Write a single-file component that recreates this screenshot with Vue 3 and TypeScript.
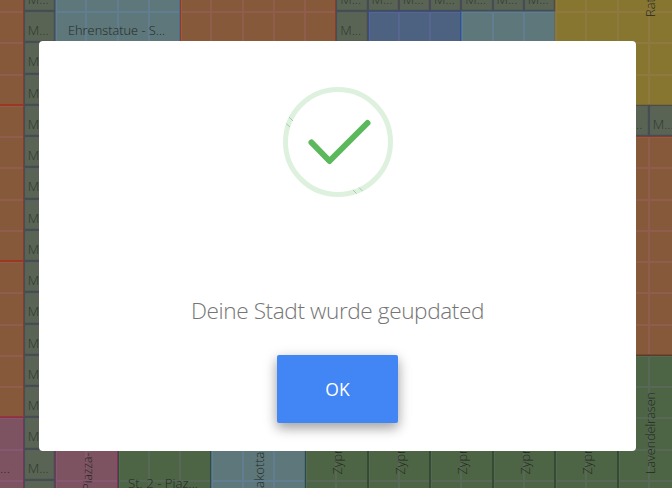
<script setup lang="ts">
type Kind = 'brown' | 'path' | 'teal' | 'blue' | 'gold' | 'green' | 'pink'

interface Tile {
  kind: Kind
  col: number
  row: number
  w: number
  h: number
}

interface Label {
  text: string
  x: number
  y: number
  length: number
  vertical?: boolean
  faint?: boolean
}

const UNIT = 31.25
const px = (col: number): number => Math.round(23.8 + col * UNIT)
const py = (row: number): number => Math.round(11 + row * UNIT)

const tile = (kind: Kind, col: number, row: number, w: number, h: number): Tile => ({ kind, col, row, w, h })

const paths: Tile[] = [
  ...Array.from({ length: 17 }, (_, i) => tile('path', 0, i - 1, 1, 1)),
  ...Array.from({ length: 7 }, (_, i) => tile('path', 10 + i, -1, 1, 1)),
  tile('path', 10, 0, 1, 1),
  tile('path', 19, 3, 1, 1),
  tile('path', 20, 3, 1, 1),
]

const tiles: Tile[] = [
  tile('brown', -4, -2, 4, 5),
  tile('brown', -4, 3, 4, 5),
  tile('brown', -4, 8, 4, 5),
  tile('pink', -4, 13, 4, 4),
  tile('teal', 1, -2, 4, 4),
  tile('brown', 5, -2, 5, 6),
  tile('blue', 11, 0, 3, 3),
  tile('teal', 14, 0, 3, 3),
  tile('gold', 17, -4, 6, 7),
  tile('brown', 17, 4, 6, 7),
  tile('pink', 1, 12, 2, 6),
  tile('green', 3, 12, 3, 6),
  tile('teal', 6, 12, 3, 6),
  ...Array.from({ length: 5 }, (_, i) => tile('green', 9 + 2 * i, 12, 2, 6)),
  tile('green', 19, 11, 4, 7),
  ...paths,
]

const boxes = tiles.map((t) => {
  const x = px(t.col)
  const y = py(t.row)
  return {
    kind: t.kind,
    x,
    y,
    w: px(t.col + t.w) - x,
    h: py(t.row + t.h) - y,
    xs: Array.from({ length: t.w }, (_, i) => px(t.col + i)),
    ys: Array.from({ length: t.h }, (_, i) => py(t.row + i)),
  }
})

const labels: Label[] = [
  ...paths.map((p) => ({ text: 'M...', x: 27.7 + p.col * UNIT, y: 35 + p.row * UNIT, length: 21, faint: true })),
  { text: 'Ehrenstatue - S...', x: 68, y: 35, length: 97 },
  { text: 'St. 2 - Piaz...', x: 128, y: 488, length: 70 },
  { text: '...', x: 0, y: 473, length: 10 },
  { text: 'Rathaus', x: 655, y: 17, length: 47, vertical: true },
  { text: 'Lavendelrasen', x: 655, y: 474, length: 82, vertical: true },
  { text: 'Piazza-', x: 92.3, y: 490.5, length: 38, vertical: true },
  { text: 'akotta', x: 264, y: 488, length: 36.5, vertical: true },
  ...Array.from({ length: 5 }, (_, i) => ({
    text: 'Zypresse', x: 342 + i * 62.5, y: 474.5, length: 51, vertical: true,
  })),
]
</script>

<template>
  <main class="page">
    <svg class="map" viewBox="0 0 672 488" width="672" height="488" aria-hidden="true">
      <g v-for="(b, i) in boxes" :key="i" :class="b.kind">
        <rect class="fill" :x="b.x" :y="b.y" :width="b.w" :height="b.h" />
        <rect v-for="x in b.xs" :key="'x' + x" class="grid" :x="Math.max(x - 1, b.x)" :y="b.y" width="2" :height="b.h" />
        <rect v-for="y in b.ys" :key="'y' + y" class="grid" :x="b.x" :y="y" :width="b.w" height="2" />
        <rect class="edge" :x="b.x + 0.5" :y="b.y + 0.5" :width="b.w - 1" :height="b.h - 1" />
      </g>
      <text
        v-for="(l, i) in labels"
        :key="'l' + i"
        class="label"
        :class="{ faint: l.faint }"
        :textLength="l.length"
        lengthAdjust="spacingAndGlyphs"
        :transform="`translate(${l.x} ${l.y})${l.vertical ? ' rotate(-90)' : ''}`"
      >{{ l.text }}</text>
    </svg>
    <section class="dialog" role="dialog">
      <svg class="success" viewBox="0 0 110 110" width="110" height="110">
        <circle cx="55" cy="55" r="52.5" />
        <path class="tick" d="M28.5 55.5L46.5 74L84.5 36" />
        <path class="seam" d="M3 36.500L7 40M6 30L10 34M70 103L73.500 106.500M76 100.500L79.500 104" />
      </svg>
      <p class="message">Deine Stadt wurde geupdated</p>
      <button class="ok" type="button">OK</button>
    </section>
  </main>
</template>

<style>
body {
  margin: 0;
  overflow: hidden;
}
</style>

<style scoped>
.page {
  width: 672px;
  height: 488px;
  overflow: hidden;
  display: grid;
  background: #5a6454;
  font-family: "Open Sans", "Noto Sans", sans-serif;
}
.map,
.dialog {
  grid-area: 1 / 1;
}
.map {
  display: block;
}
.fill {
  fill: var(--fill);
}
.grid {
  fill: var(--grid);
}
.edge {
  fill: none;
  stroke: var(--edge);
  stroke-width: 1;
}
.brown { --fill: #86593b; --grid: #905c4c; --edge: #9b3822; }
.path { --fill: #5a6454; --grid: #5e6962; --edge: #484d51; }
.path .edge { stroke-width: 1.5; }
.teal { --fill: #5d777a; --grid: #637d90; --edge: #496f8e; }
.blue { --fill: #4d6280; --grid: #586590; --edge: #344f9b; }
.gold { --fill: #867630; --grid: #907941; --edge: #9a7218; }
.green { --fill: #4e6545; --grid: #576857; --edge: #344c31; }
.pink { --fill: #7d5362; --grid: #865770; --edge: #83305f; }
.label {
  font-size: 13.3px;
  font-weight: 300;
  fill: #232823;
}
.label.faint {
  fill: #30372f;
}
.dialog {
  box-sizing: border-box;
  width: 597px;
  height: 410px;
  margin: 41px 0 0 39px;
  padding-top: 46px;
  display: flex;
  flex-direction: column;
  align-items: center;
  background: #fff;
  border-radius: 4px;
}
.success {
  flex: none;
  fill: none;
}
.success circle {
  stroke: #def1de;
  stroke-width: 5;
}
.tick {
  stroke: #5cb85c;
  stroke-width: 6;
  stroke-linecap: round;
  stroke-linejoin: round;
}
.seam {
  stroke: #8fc891;
  stroke-width: 0.8;
}
.message {
  margin: 97px 0 0;
  height: 34px;
  line-height: 34px;
  font-size: 22.6px;
  font-weight: 300;
  letter-spacing: -0.4px;
  color: #757575;
  white-space: nowrap;
}
.ok {
  width: 121px;
  height: 68px;
  margin-top: 27px;
  padding: 0;
  border: 0;
  border-radius: 2px;
  background: #4285f4;
  box-shadow: 0 5px 11px rgba(0, 0, 0, 0.24), 0 4px 15px rgba(0, 0, 0, 0.19);
  color: #fff;
  font: 400 17.5px/68px "Open Sans", "Noto Sans", sans-serif;
}
</style>
